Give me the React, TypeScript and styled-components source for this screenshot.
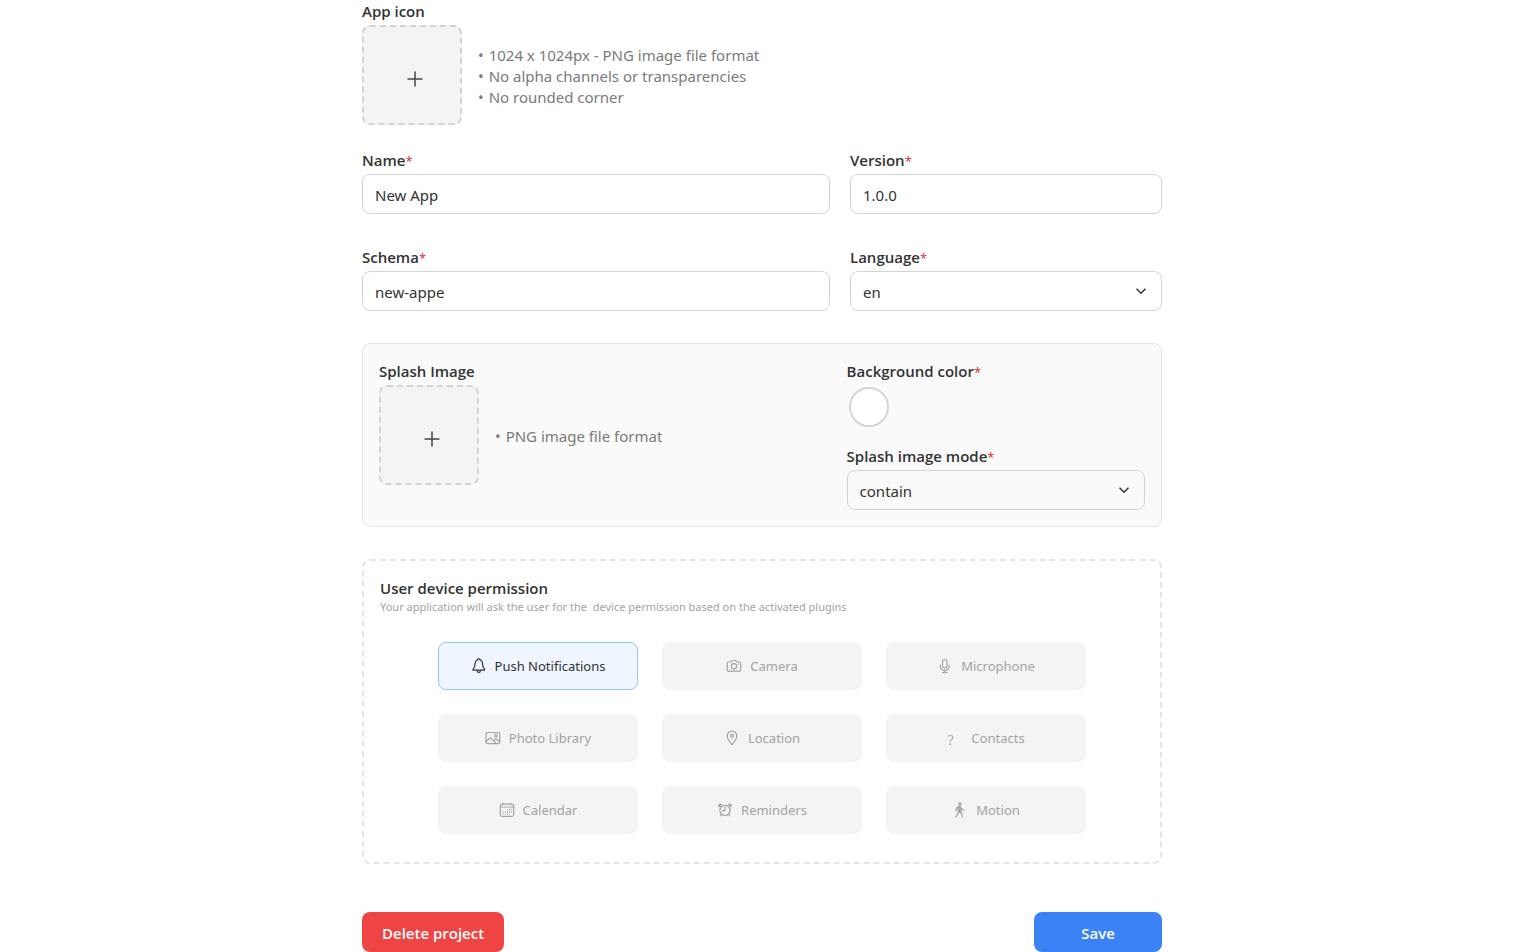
import React from "react";
import styled, { createGlobalStyle } from "styled-components";

const GlobalStyle = createGlobalStyle`
  *, *::before, *::after { box-sizing: border-box; }
  body { margin: 0; background: #fff; }
  body, button, input, select {
    font-family: "Segoe UI", "Noto Sans", sans-serif;
    font-size: 15px;
    line-height: 20px;
    color: #333;
  }
  h2, p, ul { margin: 0; padding: 0; }
`;

const Page = styled.form`
  max-width: 832px;
  margin: 0 auto;
  padding: 0 16px;
`;
const Columns = styled.div<{ $top?: number }>`
  display: grid;
  grid-template-columns: 3fr 2fr;
  column-gap: 20px;
  margin-top: ${(p) => p.$top ?? 0}px;
`;
const Field = styled.div`
  display: flex;
  flex-direction: column;
  align-items: stretch;
`;
const Label = styled.label`
  height: 25px;
  line-height: 22px;
  font-family: "Segoe UI", "Open Sans", sans-serif;
  font-weight: 600;
  white-space: nowrap;
`;
const Star = styled.span`
  color: #dc2626;
  font-size: 13px;
  font-weight: 400;
`;
const TextInput = styled.input`
  width: 100%;
  height: 40px;
  padding: 1px 12px 0;
  border: 1px solid #d4d4d4;
  border-radius: 8px;
  background: transparent;
`;
const SelectWrap = styled.div`
  position: relative;
  svg {
    position: absolute;
    right: 15px;
    top: 14px;
    pointer-events: none;
  }
`;
const SelectBox = styled.select`
  appearance: none;
  width: 100%;
  height: 40px;
  padding: 1px 12px 0;
  border: 1px solid #d4d4d4;
  border-radius: 8px;
  background: transparent;
`;
const UploadRow = styled.div`
  display: flex;
  align-items: center;
  gap: 16px;
`;
const UploadButton = styled.button`
  flex: none;
  display: flex;
  align-items: center;
  justify-content: center;
  width: 100px;
  height: 100px;
  padding: 8px 0 0 6px;
  border: 2px dashed #d4d4d4;
  border-radius: 8px;
  background: #f4f4f4;
`;
const Hints = styled.ul`
  list-style: none;
  padding-top: 2px;
  color: #7a7a7a;
  line-height: 21px;
`;
const Hint = styled.li`
  display: flex;
  gap: 5px;
`;
const SplashCard = styled.section`
  margin-top: 32px;
  padding: 16px;
  border: 1px solid #e5e5e5;
  border-radius: 8px;
  background: #fafafa;
`;
const Side = styled.div`
  display: flex;
  flex-direction: column;
  gap: 16px;
`;
const ColorInput = styled.input`
  appearance: none;
  width: 40px;
  height: 40px;
  margin: 2px;
  padding: 0;
  border: 2px solid #d4d4d4;
  border-radius: 50%;
  background: #fff;
  overflow: hidden;
  &::-webkit-color-swatch-wrapper { padding: 0; }
  &::-webkit-color-swatch { border: 0; border-radius: 50%; }
`;
const Permissions = styled.section`
  margin-top: 32px;
  padding: 16px 16px 28px;
  border: 2px dashed #e5e5e5;
  border-radius: 8px;
`;
const Title = styled.h2`
  font-family: "Segoe UI", "Open Sans", sans-serif;
  font-size: 15px;
  line-height: 22px;
  font-weight: 600;
`;
const Note = styled.p`
  font-size: 11px;
  line-height: 16px;
  color: #a3a3a3;
  white-space: pre-wrap;
`;
const PermissionGrid = styled.div`
  display: grid;
  grid-template-columns: repeat(auto-fit, 200px);
  justify-content: center;
  gap: 24px;
  padding: 0 48px;
  margin-top: 27px;
`;
const PermissionButton = styled.button<{ $active?: boolean }>`
  display: flex;
  align-items: center;
  justify-content: center;
  gap: 8px;
  height: 48px;
  padding: 0;
  border: 1px solid ${(p) => (p.$active ? "#93c5fd" : "#f4f4f4")};
  border-radius: 8px;
  background: ${(p) => (p.$active ? "#eff6ff" : "#f4f4f4")};
  color: ${(p) => (p.$active ? "#333" : "#a3a3a3")};
  font-size: 13px;
`;
const Missing = styled.span`
  width: 16px;
  padding-top: 4px;
  font-family: "Liberation Serif", serif;
  font-size: 15px;
  text-align: left;
`;
const Footer = styled.footer`
  display: flex;
  justify-content: space-between;
  margin-top: 48px;
`;
const ActionButton = styled.button<{ $danger?: boolean }>`
  min-width: 128px;
  height: 40px;
  padding: 2px 20px 0;
  border: 0;
  border-radius: 8px;
  background: ${(p) => (p.$danger ? "#ef4444" : "#3b82f6")};
  color: #fff;
  font-family: "Segoe UI", "Open Sans", sans-serif;
  font-weight: 600;
`;

const Plus = () => (
  <svg width="16" height="16" viewBox="0 0 16 16" fill="none" stroke="#444" strokeWidth="1.5" aria-hidden="true">
    <path d="M8 .5v15M.5 8h15" />
  </svg>
);
const Chevron = () => (
  <svg width="12" height="12" viewBox="0 0 12 12" fill="none" stroke="#333" strokeWidth="1.5" aria-hidden="true">
    <path d="M1.500 3.800 6 8.200l4.500-4.400" />
  </svg>
);
const Glyph = ({ children }: { children: React.ReactNode }) => (
  <svg width="16" height="16" viewBox="0 0 16 16" fill="none" stroke="currentColor" strokeWidth="1.2" strokeLinecap="round" strokeLinejoin="round" aria-hidden="true">
    {children}
  </svg>
);

const icons = {
  bell: (
    <Glyph>
      <path d="M2 12.200h11.600c.3-.9-.2-1.300-.8-2-.8-.9-1-1.900-1.100-3.600-.2-2.900-1.100-4.200-2.400-4.600a1.600 1.600 0 0 0-3 0C5 2.400 4.100 3.700 3.900 6.600c-.1 1.700-.3 2.700-1.100 3.600-.6.7-1.100 1.100-.8 2Z" />
      <path d="M6.100 12.400c0 2.600 3.400 2.600 3.400 0" />
    </Glyph>
  ),
  camera: (
    <Glyph>
      <path d="M2.800 4h1.600c.5 0 .8-.2 1.100-.6l.3-.4c.3-.4.600-.5 1.100-.5h2.200c.5 0 .8.100 1.100.5l.3.400c.3.400.6.600 1.100.6h1.600c1 0 1.600.6 1.600 1.600v6c0 1-.6 1.600-1.600 1.600H2.800c-1 0-1.600-.6-1.600-1.600v-6C1.200 4.600 1.800 4 2.800 4Z" />
      <circle cx="8" cy="8.300" r="2.600" />
      <path d="M12.500 6.200h.1" />
    </Glyph>
  ),
  mic: (
    <Glyph>
      <rect x="5.500" y="1.500" width="4.400" height="8.400" rx="2.200" />
      <path d="M3.300 7v1.200c0 5.500 8.800 5.500 8.800 0V7M7.700 12.500v2M5.400 14.500H10" />
    </Glyph>
  ),
  photo: (
    <Glyph>
      <rect x="1" y="2.500" width="13.800" height="11.200" rx="1.800" />
      <circle cx="10.900" cy="5.700" r="1.300" />
      <path d="m1 11.800 3.600-3.500c.5-.5 1-.5 1.500 0l5.300 5.300M8.500 10.700l1.700-1.500c.5-.4 1-.4 1.500 0l3.200 3" />
    </Glyph>
  ),
  pin: (
    <Glyph>
      <path d="M8 14.700c-1.300-2-4.800-5.200-4.800-8.800a4.800 4.800 0 0 1 9.600 0c0 3.600-3.500 6.800-4.800 8.800Z" />
      <circle cx="8" cy="5.900" r="1.500" />
    </Glyph>
  ),
  calendar: (
    <Glyph>
      <rect x="1.300" y="2.200" width="13.400" height="12.200" rx="1.800" />
      <path d="M1.300 5h13.400M4 2V1.300M12 2V1.300" />
      <path d="M8.400 7.600h.1M10.400 7.600h.1M12.400 7.600h.1M4.200 9.900h.1M6.300 9.900h.1M8.400 9.900h.1M10.400 9.900h.1M12.400 9.900h.1M4.200 12h.1M6.300 12h.1M8.400 12h.1M10.400 12h.1" />
    </Glyph>
  ),
  alarm: (
    <Glyph>
      <circle cx="8" cy="8.400" r="5.100" />
      <path d="M8 5.200v3.400H5.200M4.500 12.300l-1.200 1.600M11.500 12.300l1.200 1.600" />
      <path fill="currentColor" d="M1.900 4.500C1.200 2.700 3 1.600 4.400 2.500ZM14.100 4.500c.7-1.800-1.100-2.900-2.500-2Z" />
    </Glyph>
  ),
  walk: (
    <Glyph>
      <circle cx="8" cy="2" r="1.200" />
      <path d="M7.900 4.300c-1.400 0-2.600.9-3.300 1.800L3.700 8.600M8.400 4.400l1.200 2.500 2.300 1.200M6.200 5.300l-.1 4.200-.4 2.700-1.900 2.700M8.900 5.700l-.2 3.500 1 2.600.7 3.100M6.300 9.600l2.300 1.200M7.500 4.500v5" />
    </Glyph>
  ),
};

const permissions: { name: string; icon: React.ReactNode; active?: boolean }[] = [
  { name: "Push Notifications", icon: icons.bell, active: true },
  { name: "Camera", icon: icons.camera },
  { name: "Microphone", icon: icons.mic },
  { name: "Photo Library", icon: icons.photo },
  { name: "Location", icon: icons.pin },
  { name: "Contacts", icon: <Missing aria-hidden="true">?</Missing> },
  { name: "Calendar", icon: icons.calendar },
  { name: "Reminders", icon: icons.alarm },
  { name: "Motion", icon: icons.walk },
];

const RequiredLabel = ({ id, text }: { id: string; text: string }) => (
  <Label htmlFor={id}>{text}<Star>*</Star></Label>
);
const TextField = ({ id, text, value }: { id: string; text: string; value: string }) => (
  <Field>
    <RequiredLabel id={id} text={text} />
    <TextInput id={id} defaultValue={value} />
  </Field>
);
const SelectField = ({ id, text, options }: { id: string; text: string; options: string[] }) => (
  <Field>
    <RequiredLabel id={id} text={text} />
    <SelectWrap>
      <SelectBox id={id}>{options.map((o) => <option key={o}>{o}</option>)}</SelectBox>
      <Chevron />
    </SelectWrap>
  </Field>
);
const Upload = ({ id, text, hints }: { id: string; text: string; hints: string[] }) => (
  <Field>
    <Label htmlFor={id}>{text}</Label>
    <UploadRow>
      <UploadButton type="button" id={id}><Plus /></UploadButton>
      <Hints>
        {hints.map((h) => (
          <Hint key={h}>
            <span>•</span>
            <span>{h}</span>
          </Hint>
        ))}
      </Hints>
    </UploadRow>
  </Field>
);

export default function App() {
  return (
    <>
      <GlobalStyle />
      <Page onSubmit={(e) => e.preventDefault()}>
        <Upload
          id="app-icon"
          text="App icon"
          hints={["1024 x 1024px - PNG image file format", "No alpha channels or transparencies", "No rounded corner"]}
        />
        <Columns $top={24}>
          <TextField id="name" text="Name" value="New App" />
          <TextField id="version" text="Version" value="1.0.0" />
        </Columns>
        <Columns $top={32}>
          <TextField id="schema" text="Schema" value="new-appe" />
          <SelectField id="language" text="Language" options={["en", "fr"]} />
        </Columns>
        <SplashCard>
          <Columns>
            <Upload id="splash" text="Splash Image" hints={["PNG image file format"]} />
            <Side>
              <Field>
                <RequiredLabel id="background" text="Background color" />
                <ColorInput id="background" type="color" defaultValue="#ffffff" />
              </Field>
              <SelectField id="mode" text="Splash image mode" options={["contain", "cover"]} />
            </Side>
          </Columns>
        </SplashCard>
        <Permissions>
          <Title>User device permission</Title>
          <Note>{"Your application will ask the user for the  device permission based on the activated plugins"}</Note>
          <PermissionGrid>
            {permissions.map((p) => (
              <PermissionButton key={p.name} type="button" $active={p.active}>
                {p.icon}
                <span>{p.name}</span>
              </PermissionButton>
            ))}
          </PermissionGrid>
        </Permissions>
        <Footer>
          <ActionButton type="button" $danger>Delete project</ActionButton>
          <ActionButton type="submit">Save</ActionButton>
        </Footer>
      </Page>
    </>
  );
}
